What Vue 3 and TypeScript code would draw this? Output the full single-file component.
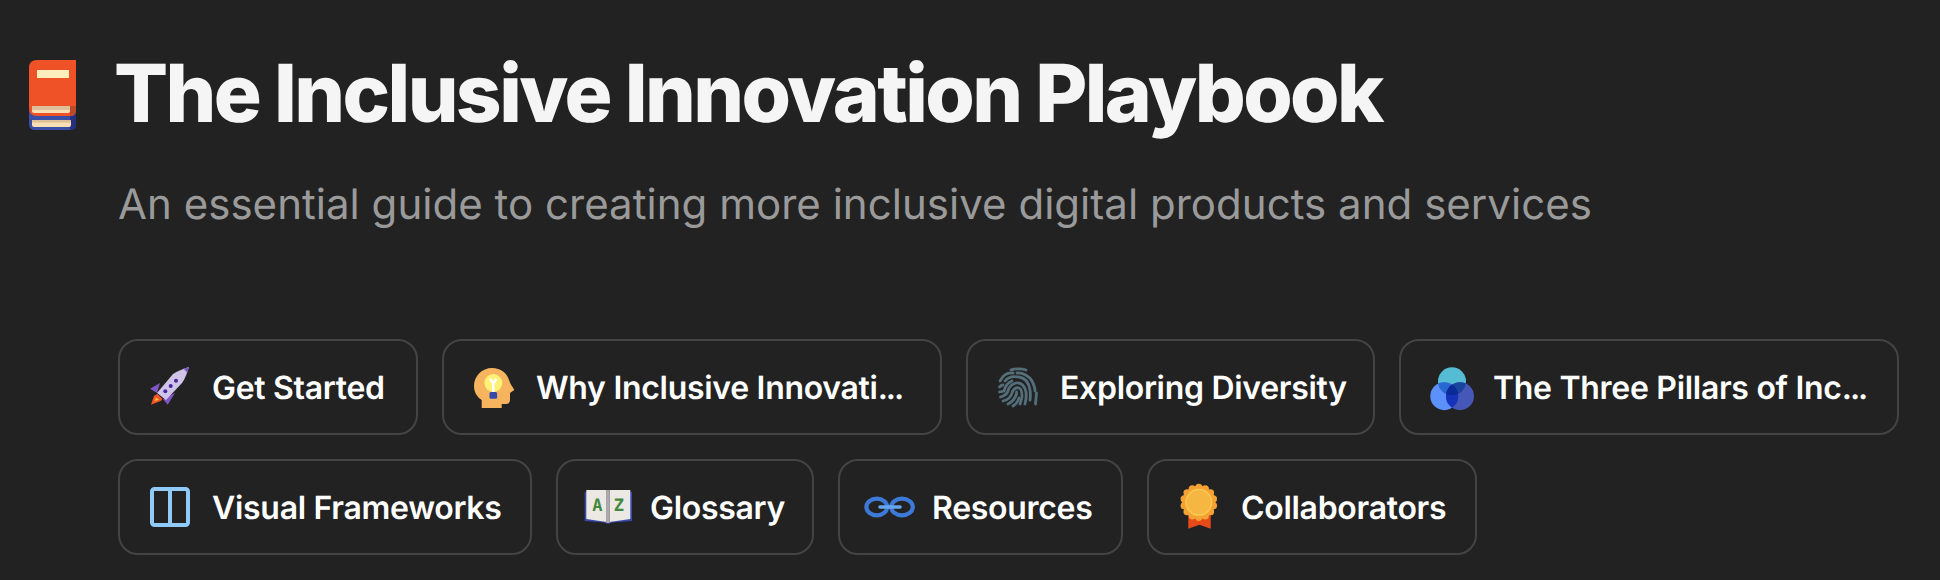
<script setup lang="ts">
const rows = [
  [
    { id: 'rocket', label: 'Get Started', w: 300, cut: false },
    { id: 'head', label: 'Why Inclusive Innovati', w: 500, cut: true },
    { id: 'finger', label: 'Exploring Diversity', w: 409, cut: false },
    { id: 'venn', label: 'The Three Pillars of Inc', w: 500, cut: true },
  ],
  [
    { id: 'frame', label: 'Visual Frameworks', w: 414, cut: false },
    { id: 'az', label: 'Glossary', w: 258, cut: false },
    { id: 'link', label: 'Resources', w: 285, cut: false },
    { id: 'medal', label: 'Collaborators', w: 330, cut: false },
  ],
];
const bumps = Array.from({ length: 14 }, (_, i) => {
  const a = (i * Math.PI) / 7 + Math.PI / 14;
  return { x: 19.8 + 15 * Math.cos(a), y: 15.3 + 15 * Math.sin(a) };
});
</script>

<template>
  <div class="page">
    <header class="head">
      <svg class="book" viewBox="0 0 47 70">
        <path d="M0 50h47v14q0 6-6 6H6q-6 0-6-6z" fill="#3b4ea6" />
        <path d="M41 50h6v14q0 6-6 6z" fill="#25307f" />
        <rect x="3" y="60" width="39" height="7" rx="2" fill="#f8dfb4" />
        <rect x="3" y="60" width="39" height="2.5" fill="#dfbf97" />
        <path d="M8 0h39v50q0 6-6 6H8q-8 0-8-8V8q0-8 8-8z" fill="#f05228" />
        <path d="M41 46h6v4q0 6-6 6z" fill="#bb4a2b" />
        <rect x="3" y="46" width="38" height="7" rx="2" fill="#f8dfb4" />
        <rect x="3" y="46" width="38" height="4" fill="#dfbf97" />
        <rect x="8" y="10" width="32" height="8" fill="#fdeebb" />
      </svg>
      <div class="titles">
        <h1>The Inclusive Innovation Playbook</h1>
        <p>An essential guide to creating more inclusive digital products and services</p>
      </div>
    </header>
    <nav class="grid">
      <div v-for="(row, i) in rows" :key="i" class="row">
        <a v-for="item in row" :key="item.id" class="card" :style="{ width: item.w + 'px' }">
          <svg class="ico" viewBox="0 0 40 40">
            <template v-if="item.id === 'rocket'">
              <path d="M10 16 L0 21.700 L7 26 z" fill="#7e57c2" />
              <path d="M25 26 L17.700 37.700 L13 32 z" fill="#7e57c2" />
              <path d="M1 37.700 L4 28.700 L7.500 27 L12.500 32 L10.700 34 z" fill="#f0552a" />
              <path d="M4.500 34.500 L6 30.500 L9 32.500 z" fill="#fbc02d" />
              <path d="M7 26 L23 7 C27 4 33 2 39 0 C37 6 35 12 32 16 L16 33 z" fill="#d1c4e9" />
              <path d="M33.500 1.800 L39 0 L37 5.600z" fill="#7e57c2" />
              <circle cx="26" cy="13.700" r="2" fill="#4527a0" /><circle cx="20.700" cy="19" r="2" fill="#4527a0" /><circle cx="15.300" cy="24.300" r="2" fill="#4527a0" />
            </template>
            <template v-else-if="item.id === 'head'">
              <path d="M7.700 41 V33 C3 30 0 25 0 19 C0 9 8 1 18 1 C27 1 33 6 35 13 C36 17 39 20 40.300 23 L36 26 V33 Q36 37 32 37 H27.700 V41 z" fill="#f6b45e" />
              <circle cx="19.300" cy="16" r="9" fill="#fff176" />
              <rect x="15.500" y="25" width="7.600" height="6.700" rx="1.500" fill="#3949ab" />
              <path d="M19.300 25v-8.500M16 11.700l3.300 4.800 3.300-4.800" stroke="#fff" stroke-width="2.400" fill="none" />
            </template>
            <template v-else-if="item.id === 'finger'">
              <g fill="none" stroke="#546e7a" stroke-width="2.800" stroke-linecap="round">
                <path d="M13 2.800C17 1.500 24 1.500 28 3" />
                <path d="M2 14C5 8 10 5.500 15 6" />
                <path d="M19 6C25 5.500 31 9 34 14C36 18 37 21 37 24" />
                <path d="M1.500 20C2.500 19 4 18 5 18" />
                <path d="M7 14C10 10 16 9 21 10C27 11 31 16 32 23C32.500 27 32.500 30 32 33" />
                <path d="M1.500 25L6 24C7 20 9 16 14 14" />
                <path d="M2.500 30C6 29 9 27 10 24C11 20 14 17 18 16C23 15 27 19 28 25C28.500 29 28 33 27 37" />
                <path d="M5 34C9 33 13 30 14 26C15 22 18 20 21 21C24 22 24 26 24 29C24 31 23 34 22 37" />
                <path d="M10 37C14 35 17 32 18.500 27L18.500 25" />
                <path d="M15 39C18 37 20 35 21 31" />
                <path d="M38.500 26L37.500 37" />
              </g>
            </template>
            <template v-else-if="item.id === 'venn'">
              <defs>
                <clipPath id="vt"><circle cx="21" cy="14.300" r="14" /></clipPath>
                <clipPath id="vl"><circle cx="13.300" cy="29.200" r="14" /></clipPath>
              </defs>
              <circle cx="21" cy="14.300" r="14" fill="#56bcd4" />
              <circle cx="13.300" cy="29.200" r="14" fill="#5c90fb" />
              <circle cx="29" cy="29.200" r="14" fill="#4558b8" />
              <circle cx="13.300" cy="29.200" r="14" fill="#2968d2" clip-path="url(#vt)" />
              <circle cx="29" cy="29.200" r="14" fill="#1a459c" clip-path="url(#vt)" />
              <circle cx="29" cy="29.200" r="14" fill="#1532b8" clip-path="url(#vl)" />
              <g clip-path="url(#vt)"><circle cx="29" cy="29.200" r="14" fill="#0c2a95" clip-path="url(#vl)" /></g>
            </template>
            <template v-else-if="item.id === 'frame'">
              <rect x="2" y="2" width="36" height="36" rx="2.500" fill="none" stroke="#90caf9" stroke-width="4" />
              <path d="M20 2v36" stroke="#90caf9" stroke-width="4" />
            </template>
            <template v-else-if="item.id === 'az'">
              <path d="M-3.300 5H44V34L24 35.500Q20 38 16 35.500L-3.300 34z" fill="#3949ab" />
              <path d="M-1.700 3H18.500V35L-1.700 32z" fill="#ece8e3" />
              <path d="M42.300 3H21.700V35L42.300 32z" fill="#ece8e3" />
              <path d="M18.300 3h3.400v33h-3.400z" fill="#b0a9a6" />
              <text x="9.300" y="24.300" class="az">A</text><text x="30.700" y="24.300" class="az">Z</text>
            </template>
            <template v-else-if="item.id === 'link'">
              <g fill="none" stroke="#3d7ad8" stroke-width="4.200">
                <ellipse cx="6.800" cy="20" rx="10.400" ry="8.300" /><ellipse cx="32" cy="20" rx="10.800" ry="8.300" />
              </g>
              <path d="M10 20h20" stroke="#64a6f0" stroke-width="3.600" stroke-linecap="round" />
            </template>
            <template v-else>
              <path d="M9.300 25V41.700L20.500 37.700 31.700 41.700V25z" fill="#e64a19" />
              <circle cx="19.800" cy="15.300" r="16.500" fill="#f4a233" />
              <circle v-for="(b, n) in bumps" :key="n" :cx="b.x" :cy="b.y" r="3.600" fill="#f4a233" />
              <circle cx="19.800" cy="15.300" r="12.800" fill="#f6b642" stroke="#fbc94f" stroke-width="1.500" />
            </template>
          </svg>
          <span>{{ item.label }}<span v-if="item.cut" class="dots">...</span></span>
        </a>
      </div>
    </nav>
  </div>
</template>

<style scoped>
.page {
  width: 1940px;
  height: 580px;
  box-sizing: border-box;
  padding: 60px 0 0 29px;
  background: #222222;
  font-family: Inter, sans-serif;
  text-rendering: geometricPrecision;
  overflow: hidden;
}
.head {
  display: flex;
  gap: 40px;
  align-items: flex-start;
}
.book {
  width: 47px;
  height: 70px;
  flex: none;
}
h1 {
  margin: -14px 0 0 -2px;
  font-size: 80px;
  line-height: 96px;
  font-weight: 800;
  letter-spacing: -2.6px;
  color: #f5f5f5;
}
p {
  margin: 33px 0 0 2px;
  font-size: 42px;
  line-height: 60px;
  letter-spacing: 0.03px;
  color: #9a9a9a;
}
.grid {
  margin: 104px 0 0 89px;
  display: flex;
  flex-direction: column;
  gap: 24px;
}
.row {
  display: flex;
  gap: 24px;
}
.card {
  flex: none;
  height: 96px;
  box-sizing: border-box;
  border: 2px solid #444444;
  border-radius: 20px;
  padding: 0 0 0 30px;
  display: flex;
  align-items: center;
  gap: 22px;
  color: #fff;
  font-size: 32px;
  font-weight: 600;
  letter-spacing: -0.3px;
  white-space: nowrap;
}
.dots {
  letter-spacing: -2px;
}
.ico {
  width: 40px;
  height: 40px;
  flex: none;
  overflow: visible;
}
.az {
  font-family: "DejaVu Sans Mono", monospace;
  font-size: 17px;
  font-weight: 700;
  fill: #43883f;
  text-anchor: middle;
}
</style>
